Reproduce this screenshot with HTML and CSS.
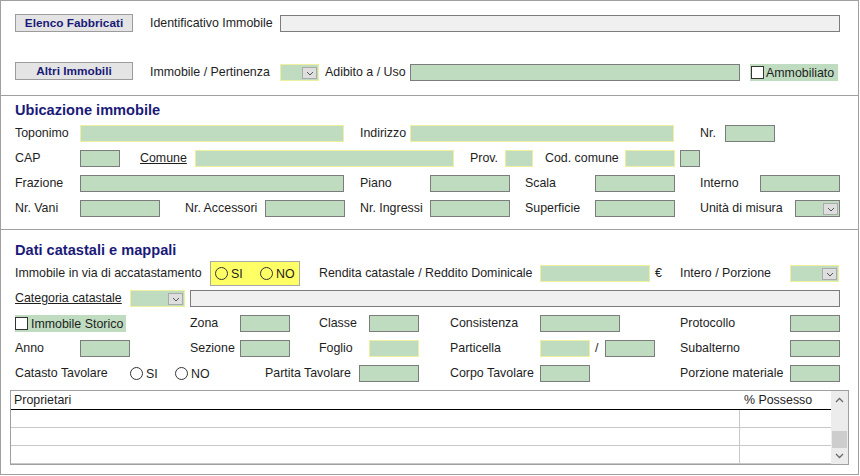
FILE: index.html
```html
<!DOCTYPE html>
<html lang="it">
<head>
<meta charset="utf-8">
<title>Immobile</title>
<link rel="stylesheet" href="styles.css">
</head>
<body>
<div class="page">
  <section class="sec1">
    <div class="r1">
      <button class="btn">Elenco Fabbricati</button>
      <span class="lbl w130 ml17">Identificativo Immobile</span>
      <input class="fld g w560" type="text">
    </div>
    <div class="r2">
      <button class="btn mb1">Altri Immobili</button>
      <span class="lbl w130 ml17">Immobile / Pertinenza</span>
      <div class="dd y w39"><span class="ddbtn"><svg width="8" height="5" viewBox="0 0 8 5"><path d="M1 1L4 4L7 1" fill="none" stroke="#555" stroke-width="1"/></svg></span></div>
      <span class="lbl w85 ml6">Adibito a / Uso</span>
      <input class="fld w330" type="text">
      <label class="chk w88 ml10"><span class="box"></span>Ammobiliato</label>
    </div>
  </section>

  <section class="sec2">
    <div class="title">Ubicazione immobile</div>
    <div class="row">
      <span class="lbl w65">Toponimo</span>
      <input class="fld y w264" type="text">
      <span class="lbl w50 ml16">Indirizzo</span>
      <input class="fld y w264" type="text">
      <span class="lbl w25 ml26">Nr.</span>
      <input class="fld w50" type="text">
    </div>
    <div class="row">
      <span class="lbl w65">CAP</span>
      <input class="fld w40" type="text">
      <span class="lbl u w55 ml20">Comune</span>
      <input class="fld y w259" type="text">
      <span class="lbl w35 ml16">Prov.</span>
      <input class="fld y w28" type="text">
      <span class="lbl w80 ml12">Cod. comune</span>
      <input class="fld y w50" type="text">
      <input class="fld w20 ml5" type="text">
    </div>
    <div class="row">
      <span class="lbl w65">Frazione</span>
      <input class="fld w264" type="text">
      <span class="lbl w70 ml16">Piano</span>
      <input class="fld w80" type="text">
      <span class="lbl w70 ml15">Scala</span>
      <input class="fld w80" type="text">
      <span class="lbl w60 ml25">Interno</span>
      <input class="fld w80" type="text">
    </div>
    <div class="row">
      <span class="lbl w65">Nr. Vani</span>
      <input class="fld w80" type="text">
      <span class="lbl w80 ml25">Nr. Accessori</span>
      <input class="fld w80" type="text">
      <span class="lbl w70 ml15">Nr. Ingressi</span>
      <input class="fld w80" type="text">
      <span class="lbl w70 ml15">Superficie</span>
      <input class="fld w80" type="text">
      <span class="lbl w95 ml25">Unità di misura</span>
      <div class="dd w45"><span class="ddbtn"><svg width="8" height="5" viewBox="0 0 8 5"><path d="M1 1L4 4L7 1" fill="none" stroke="#555" stroke-width="1"/></svg></span></div>
    </div>
  </section>

  <section class="sec3">
    <div class="title">Dati catastali e mappali</div>
    <div class="row">
      <span class="lbl w195">Immobile in via di accatastamento</span>
      <div class="ybox w90">
        <span class="ropt w45"><span class="radio"></span>SI</span>
        <span class="ropt"><span class="radio"></span>NO</span>
      </div>
      <span class="lbl w221 ml19">Rendita catastale / Reddito Dominicale</span>
      <input class="fld y w110" type="text">
      <span class="lbl w30 pl5">€</span>
      <span class="lbl w110">Intero / Porzione</span>
      <div class="dd y w49"><span class="ddbtn"><svg width="8" height="5" viewBox="0 0 8 5"><path d="M1 1L4 4L7 1" fill="none" stroke="#555" stroke-width="1"/></svg></span></div>
    </div>
    <div class="row">
      <span class="lbl u w115">Categoria catastale</span>
      <div class="dd y w55"><span class="ddbtn"><svg width="8" height="5" viewBox="0 0 8 5"><path d="M1 1L4 4L7 1" fill="none" stroke="#555" stroke-width="1"/></svg></span></div>
      <input class="fld g w650 ml5" type="text">
    </div>
    <div class="row">
      <label class="chk w111"><span class="box"></span>Immobile Storico</label>
      <span class="lbl w50 ml64">Zona</span>
      <input class="fld w50" type="text">
      <span class="lbl w50 ml29">Classe</span>
      <input class="fld w50" type="text">
      <span class="lbl w90 ml31">Consistenza</span>
      <input class="fld w80" type="text">
      <span class="lbl w110 ml60">Protocollo</span>
      <input class="fld w50" type="text">
    </div>
    <div class="row">
      <span class="lbl w65">Anno</span>
      <input class="fld w50" type="text">
      <span class="lbl w50 ml60">Sezione</span>
      <input class="fld w50" type="text">
      <span class="lbl w50 ml29">Foglio</span>
      <input class="fld y w50" type="text">
      <span class="lbl w90 ml31">Particella</span>
      <input class="fld y w50" type="text">
      <span class="lbl w15 pl5">/</span>
      <input class="fld w50" type="text">
      <span class="lbl w110 ml25">Subalterno</span>
      <input class="fld w50" type="text">
    </div>
    <div class="row">
      <span class="lbl w115">Catasto Tavolare</span>
      <span class="ropt w45"><span class="radio"></span>SI</span>
      <span class="ropt w45"><span class="radio"></span>NO</span>
      <span class="lbl w94 ml45">Partita Tavolare</span>
      <input class="fld w60" type="text">
      <span class="lbl w90 ml31">Corpo Tavolare</span>
      <input class="fld w50" type="text">
      <span class="lbl w110 ml90">Porzione materiale</span>
      <input class="fld w50" type="text">
    </div>

    <div class="grid">
      <div class="gcols">
        <div class="ghead"><span class="c1">Proprietari</span><span class="c2">% Possesso</span></div>
        <div class="grow"><span class="c1"></span><span class="c2"></span></div>
        <div class="grow"><span class="c1"></span><span class="c2"></span></div>
        <div class="grow"><span class="c1"></span><span class="c2"></span></div>
      </div>
      <div class="sbar">
        <span class="sarr up"><svg width="9" height="6" viewBox="0 0 9 6"><path d="M1 5L4.5 1.5L8 5" fill="none" stroke="#6a6a6a" stroke-width="1.3"/></svg></span>
        <span class="strack"><span class="thumb"></span></span>
        <span class="sarr dn"><svg width="9" height="6" viewBox="0 0 9 6"><path d="M1 1L4.5 4.5L8 1" fill="none" stroke="#6a6a6a" stroke-width="1.3"/></svg></span>
      </div>
    </div>
  </section>
</div>
</body>
</html>
```

FILE: styles.css
```css
* { box-sizing: border-box; }
html, body { margin: 0; padding: 0; background: #fff; }
body {
  font-family: "Liberation Sans", Arial, sans-serif;
  font-size: 12.4px;
  color: #1e1e1e;
}
.page {
  width: 859px;
  height: 475px;
  border: 1px solid #a0a0a0;
  display: flex;
  flex-direction: column;
}
.sec1 { height: 95px; border-bottom: 1px solid #a0a0a0; padding-top: 13px; flex: none; }
.sec2 { height: 134px; border-bottom: 1px solid #a0a0a0; padding-top: 4px; flex: none; }
.sec3 { flex: 1; padding-top: 10px; }

.r1 { display: flex; align-items: center; height: 18px; padding-left: 14px; }
.r2 { display: flex; align-items: flex-end; height: 19px; margin-top: 30px; padding-left: 14px; }
.row { display: flex; align-items: center; height: 25px; padding-left: 14px; }

.title {
  height: 21px;
  line-height: 21px;
  padding-left: 14px;
  font-weight: bold;
  font-size: 14.6px;
  color: #1a1a78;
}

.btn {
  width: 118px;
  height: 18px;
  padding: 0;
  margin: 0;
  border: 1px solid #9c9c9c;
  background: #e4e4e4;
  font-family: "Liberation Sans", Arial, sans-serif;
  font-weight: bold;
  font-size: 11.8px;
  color: #1a1a78;
  flex: none;
}
.mb1 { margin-bottom: 1px; }

.lbl { flex: none; white-space: nowrap; line-height: 17px; height: 17px; }
.u { text-decoration: underline; }

.fld {
  flex: none;
  height: 17px;
  margin: 0;
  padding: 0;
  border: 1px solid #7c7c7c;
  background: #c0dcc0;
  font: inherit;
  outline: none;
}
.fld.y, .dd.y { border-color: #efefa0; }
.fld.g { background: #f0f0f0; }

.dd {
  flex: none;
  height: 17px;
  border: 1px solid #7c7c7c;
  background: #c0dcc0;
  display: flex;
  align-items: center;
  justify-content: flex-end;
  padding-right: 1px;
}
.ddbtn {
  width: 15px;
  height: 12px;
  border: 1px solid #aaaaaa;
  background: #dedede;
  display: flex;
  align-items: center;
  justify-content: center;
  padding-top: 2px;
}
.ddbtn svg { display: block; }

.chk {
  flex: none;
  display: flex;
  align-items: center;
  height: 17px;
  background: #c0dcc0;
  white-space: nowrap;
}
.box {
  width: 13px;
  height: 13px;
  border: 1px solid #333;
  background: #fff;
  margin-left: 1px;
  margin-right: 2px;
  flex: none;
}
.chk.w111 .box { margin-left: 0; margin-right: 3px; }

.ybox {
  flex: none;
  height: 25px;
  border: 1px solid #a8a8a8;
  background: #ffff66;
  display: flex;
  align-items: center;
  padding-left: 4px;
}
.ropt { flex: none; display: flex; align-items: center; white-space: nowrap; }
.radio {
  width: 13px;
  height: 13px;
  border: 1px solid #333;
  border-radius: 50%;
  margin-right: 3px;
  flex: none;
}

.grid {
  margin-top: 4px;
  margin-left: 9px;
  width: 839px;
  height: 75px;
  border: 1px solid #a0a0a0;
  display: flex;
}
.gcols { width: 820px; flex: none; display: flex; flex-direction: column; }
.ghead { height: 19px; border-bottom: 1px solid #000; display: flex; align-items: center; }
.ghead .c1 { padding-left: 3px; }
.ghead .c2 { padding-left: 4px; }
.grow { height: 18px; border-bottom: 1px solid #c8c8c8; display: flex; }
.c1 { width: 729px; flex: none; }
.grow .c1 { border-right: 1px solid #c8c8c8; }
.c2 { flex: 1; }

.sbar {
  width: 17px;
  flex: none;
  background: #ececec;
  display: flex;
  flex-direction: column;
}
.sarr { height: 17px; display: flex; align-items: center; justify-content: center; flex: none; }
.sarr.dn { height: 16px; }
.strack { flex: 1; display: flex; flex-direction: column; justify-content: flex-end; padding: 0 1px; }
.thumb { height: 17px; background: #cdcdcd; }

.w15 { width: 15px; } .w20 { width: 20px; } .w25 { width: 25px; } .w28 { width: 28px; }
.w30 { width: 30px; } .w35 { width: 35px; } .w39 { width: 39px; } .w40 { width: 40px; }
.w45 { width: 45px; } .w49 { width: 49px; } .w50 { width: 50px; } .w55 { width: 55px; }
.w60 { width: 60px; } .w65 { width: 65px; } .w70 { width: 70px; } .w80 { width: 80px; }
.w85 { width: 85px; } .w88 { width: 88px; } .w90 { width: 90px; } .w94 { width: 94px; }
.w95 { width: 95px; } .w110 { width: 110px; } .w111 { width: 111px; } .w115 { width: 115px; }
.w130 { width: 130px; } .w195 { width: 195px; } .w221 { width: 221px; } .w259 { width: 259px; }
.w264 { width: 264px; } .w330 { width: 330px; } .w560 { width: 560px; } .w650 { width: 650px; }

.ml5 { margin-left: 5px; } .ml6 { margin-left: 6px; } .ml10 { margin-left: 10px; }
.ml12 { margin-left: 12px; } .ml15 { margin-left: 15px; } .ml16 { margin-left: 16px; }
.ml17 { margin-left: 17px; } .ml19 { margin-left: 19px; } .ml20 { margin-left: 20px; }
.ml25 { margin-left: 25px; } .ml26 { margin-left: 26px; } .ml29 { margin-left: 29px; }
.ml31 { margin-left: 31px; } .ml45 { margin-left: 45px; } .ml60 { margin-left: 60px; }
.ml64 { margin-left: 64px; } .ml90 { margin-left: 90px; }
.pl5 { padding-left: 5px; }
```
